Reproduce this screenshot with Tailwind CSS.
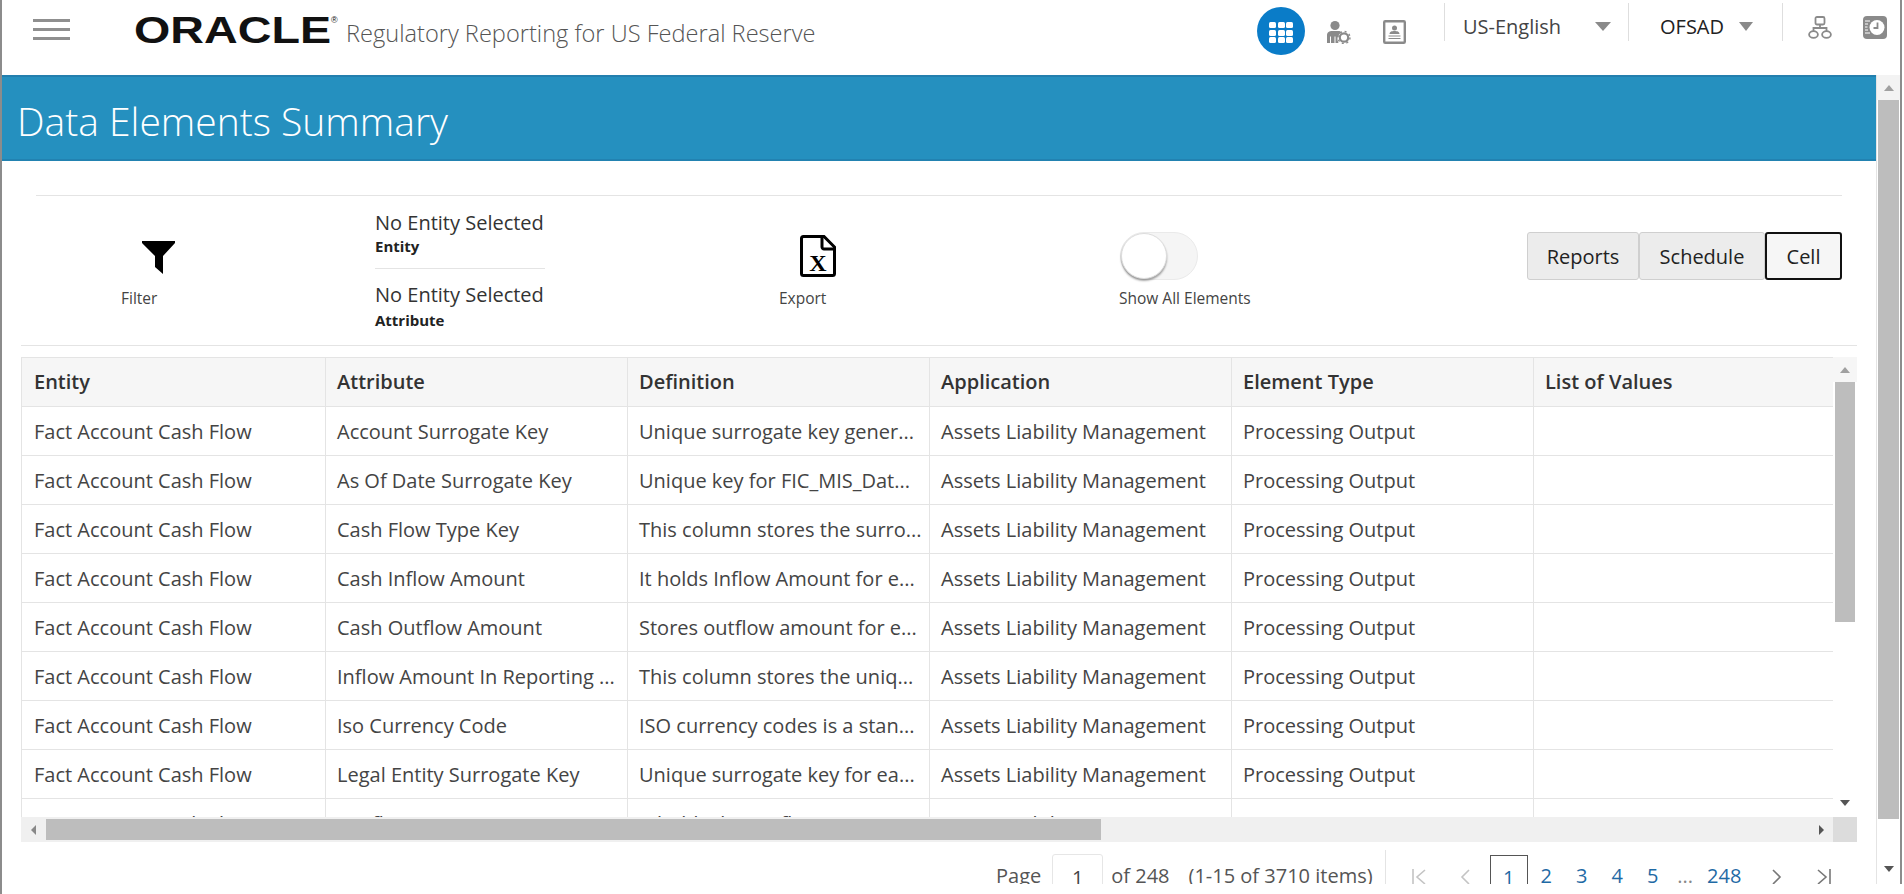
<!DOCTYPE html>
<html lang="en">
<head>
    <meta charset="UTF-8">
    <title>Data Elements Summary</title>
    <script src="https://cdn.jsdelivr.net/npm/@tailwindcss/browser@4"></script>
</head>
<body class="h-screen overflow-hidden bg-white font-['Open_Sans',sans-serif] text-[#333]">
<div class="w-[1902px] h-[894px] border-l-2 border-[#8c8c8c]">
<div class="h-[884px] border-r-2 border-[#8c8c8c] flex flex-col overflow-hidden">

    <!-- Top header -->
    <header class="h-[75px] shrink-0 flex items-start">
        <div class="ml-[31px] mt-[19px] w-[37px] flex flex-col gap-[6px]">
            <span class="h-[3px] bg-[#8f8f8f]"></span>
            <span class="h-[3px] bg-[#8f8f8f]"></span>
            <span class="h-[3px] bg-[#8f8f8f]"></span>
        </div>
        <svg class="ml-[64px] mt-[6px] shrink-0" width="206" height="44" viewBox="0 0 206 44">
            <text x="0" y="36.5" font-family="Liberation Sans" font-weight="700" font-size="36" textLength="197" lengthAdjust="spacingAndGlyphs" fill="#111">ORACLE</text>
            <text x="197" y="17" font-family="Liberation Sans" font-size="9" fill="#111">®</text>
        </svg>
        <span class="ml-[6px] mt-[17px] text-[23.6px] leading-[32px] text-[#555] font-light whitespace-nowrap">Regulatory Reporting for US Federal Reserve</span>

        <div class="ml-auto flex items-start">
            <div class="mt-[7px] w-[48px] h-[48px] rounded-full bg-[#0a7cc8] grid grid-cols-3 gap-[1.5px] p-[12px] pt-[15px] pb-[12px]">
                <span class="bg-white rounded-[1.5px]"></span><span class="bg-white rounded-[1.5px]"></span><span class="bg-white rounded-[1.5px]"></span>
                <span class="bg-white rounded-[1.5px]"></span><span class="bg-white rounded-[1.5px]"></span><span class="bg-white rounded-[1.5px]"></span>
                <span class="bg-white rounded-[1.5px]"></span><span class="bg-white rounded-[1.5px]"></span><span class="bg-white rounded-[1.5px]"></span>
            </div>
            <!-- person with gear -->
            <svg class="ml-[21px] mt-[20px]" width="25" height="24" viewBox="0 0 25 24">
                <circle cx="9" cy="5.5" r="4.6" fill="#8a8a8a"/>
                <path d="M1 23V15.5C1 12 3.5 11 6 11H12.5C14 11 15 11.6 15.6 12.5C12.5 14 11 17 11.6 20.5L12.5 23H9.5V16.5H8.5V23H5V16.5H4V23Z" fill="#8a8a8a"/>
                <circle cx="18" cy="17.5" r="4.2" fill="none" stroke="#8a8a8a" stroke-width="2.2"/>
                <circle cx="18" cy="17.5" r="6" fill="none" stroke="#8a8a8a" stroke-width="1.4" stroke-dasharray="2 2.7"/>
            </svg>
            <!-- contact card -->
            <svg class="ml-[32px] mt-[20px]" width="23" height="24" viewBox="0 0 23 24">
                <rect x="1.2" y="1.2" width="20.6" height="21.6" rx="1" fill="#fff" stroke="#8a8a8a" stroke-width="2.4"/>
                <circle cx="11.5" cy="8" r="2.5" fill="#8a8a8a"/>
                <path d="M6.5 14C6.5 11.6 9 11 11.5 11S16.5 11.6 16.5 14Z" fill="#8a8a8a"/>
                <path d="M5.5 16H17.5M5.5 18.5H17.5" stroke="#8a8a8a" stroke-width="1.2"/>
            </svg>
            <span class="ml-[38px] mt-[3px] w-px h-[38px] bg-[#dedede]"></span>
            <span class="ml-[18px] mt-[10px] w-[132px] text-[20px] leading-[34px] text-[#444]">US-English</span>
            <span class="mt-[22px] w-0 h-0 border-x-[8px] border-x-transparent border-t-[9px] border-t-[#8a8a8a]"></span>
            <span class="ml-[17px] mt-[3px] w-px h-[38px] bg-[#dedede]"></span>
            <span class="ml-[31px] mt-[10px] w-[79px] text-[20px] leading-[34px] text-[#222]">OFSAD</span>
            <span class="mt-[22px] w-0 h-0 border-x-[7px] border-x-transparent border-t-[9px] border-t-[#8a8a8a]"></span>
            <span class="ml-[29px] mt-[3px] w-px h-[38px] bg-[#dedede]"></span>
            <!-- hierarchy -->
            <svg class="ml-[25px] mt-[16px]" width="24" height="23" viewBox="0 0 24 23" fill="none" stroke="#8a8a8a" stroke-width="1.8">
                <rect x="7.5" y="1" width="9" height="7.5" rx="1.5"/>
                <path d="M12 8.5V12M5.5 15.5V12H18.5V15.5"/>
                <ellipse cx="5.5" cy="18.5" rx="4.4" ry="3.4"/>
                <ellipse cx="18.5" cy="18.5" rx="4.4" ry="3.4"/>
            </svg>
            <!-- clock book -->
            <svg class="ml-[31px] mt-[16px] mr-[13px]" width="24" height="23" viewBox="0 0 24 23">
                <rect width="24" height="23" rx="4" fill="#8a8a8a"/>
                <path d="M2 5H7M2 8H5M2 11H4.5M2 14H5M2 17H7" stroke="#fff" stroke-width="1"/>
                <circle cx="14" cy="11.5" r="7.5" fill="#fff"/>
                <path d="M14.5 6.5V12H10.5" fill="none" stroke="#8a8a8a" stroke-width="1.8"/>
            </svg>
        </div>
    </header>

    <div class="flex-1 min-h-0 flex">
        <main class="w-[1874px] flex flex-col min-h-0 overflow-hidden">
            <!-- Banner -->
            <div class="h-[86px] shrink-0 bg-[#2590bf] border-t-2 border-t-[#237fae] border-b-2 border-b-[#2282b1] flex items-center pl-[15px] pt-[4px]">
                <h1 class="text-[39px] font-light leading-none text-white whitespace-nowrap">Data Elements Summary</h1>
            </div>

            <!-- Toolbar -->
            <section class="ml-[19px] w-[1836px] mt-[34px] h-[151px] shrink-0 border-b border-[#e4e4e4] px-[15px]">
                <div class="h-full border-t border-[#e4e4e4] flex">
                    <div class="ml-[85px] w-[254px] pt-[45px]">
                        <svg class="ml-[21px]" width="33" height="33" viewBox="0 0 33 33">
                            <path d="M0 0H33V2L21 15V33L13 26V15L0 2Z" fill="#000"/>
                        </svg>
                        <p class="mt-[14px] text-[15.5px] leading-[20px] text-[#444]">Filter</p>
                    </div>
                    <div class="w-[404px] pt-[13px]">
                        <p class="text-[20px] leading-[28px] text-[#333]">No Entity Selected</p>
                        <p class="text-[15px] leading-[20px] font-bold text-[#222] mt-[-1px]">Entity</p>
                        <div class="w-[170px] mt-[12px] border-t border-[#e4e4e4]"></div>
                        <p class="mt-[12px] text-[20px] leading-[28px] text-[#333]">No Entity Selected</p>
                        <p class="text-[15px] leading-[20px] font-bold text-[#222] mt-[1px]">Attribute</p>
                    </div>
                    <div class="w-[340px] pt-[39px]">
                        <svg class="ml-[21px]" width="36" height="42" viewBox="0 0 36 42" fill="none">
                            <path d="M24 1.5H3.5C2.4 1.5 1.5 2.4 1.5 3.5V38.5C1.5 39.6 2.4 40.5 3.5 40.5H32.5C33.6 40.5 34.5 39.6 34.5 38.5V12Z" stroke="#000" stroke-width="3"/>
                            <path d="M22 1.5V12C22 13 23 14 24 14H34.5" stroke="#000" stroke-width="3"/>
                            <text x="18" y="36" text-anchor="middle" font-family="Liberation Serif" font-weight="700" font-size="24" fill="#000">X</text>
                        </svg>
                        <p class="mt-[11px] text-[15.5px] leading-[20px] text-[#444]">Export</p>
                    </div>
                    <div class="pt-[36px]">
                        <div class="ml-px w-[78px] h-[48px] rounded-full bg-[#f5f5f5] border border-[#eaeaea]">
                            <div class="w-[46px] h-[46px] rounded-full bg-white border border-[#ddd] shadow-[0_2px_2px_rgba(0,0,0,0.35)]"></div>
                        </div>
                        <p class="mt-[8px] text-[15.5px] leading-[20px] text-[#444] whitespace-nowrap">Show All Elements</p>
                    </div>
                    <div class="ml-auto pt-[36px] flex items-start text-[20px] text-[#222]">
                        <button class="h-[48px] w-[112px] pt-[2px] bg-[#ececec] border border-[#cfcfcf] rounded-[3px]">Reports</button>
                        <button class="h-[48px] w-[126px] pt-[2px] bg-[#ececec] border border-[#cfcfcf] rounded-[3px]">Schedule</button>
                        <button class="h-[48px] w-[77px] pt-[2px] bg-[#f6f6f6] border-2 border-[#111] rounded-[3px]">Cell</button>
                    </div>
                </div>
            </section>

            <!-- Data table -->
            <section class="ml-[19px] w-[1836px] mt-[11px] shrink-0">
                <div class="h-[460px] flex">
                    <div class="w-[1812px] overflow-hidden">
                        <table class="w-[1812px] table-fixed border-collapse text-[20px] text-[#444] [&_td]:h-[49px] [&_td]:border [&_td]:border-[#e4e4e4] [&_td]:pl-[11px] [&_td]:pt-[2px] [&_td]:whitespace-nowrap [&_td:first-child]:pl-[12px] [&_th]:h-[49px] [&_th]:border [&_th]:border-[#e4e4e4] [&_th]:pl-[11px] [&_th]:text-left [&_th]:font-semibold [&_th]:text-[#333] [&_th]:bg-[#f6f6f6] [&_th:first-child]:pl-[12px]">
                            <colgroup>
                                <col class="w-[304px]"><col class="w-[302px]"><col class="w-[302px]"><col class="w-[302px]"><col class="w-[302px]"><col class="w-[300px]">
                            </colgroup>
                            <thead>
                                <tr><th>Entity</th><th>Attribute</th><th>Definition</th><th>Application</th><th>Element Type</th><th>List of Values</th></tr>
                            </thead>
                            <tbody>
                                <tr><td>Fact Account Cash Flow</td><td>Account Surrogate Key</td><td>Unique surrogate key gener...</td><td>Assets Liability Management</td><td>Processing Output</td><td></td></tr>
                                <tr><td>Fact Account Cash Flow</td><td>As Of Date Surrogate Key</td><td>Unique key for FIC_MIS_Dat...</td><td>Assets Liability Management</td><td>Processing Output</td><td></td></tr>
                                <tr><td>Fact Account Cash Flow</td><td>Cash Flow Type Key</td><td>This column stores the surro...</td><td>Assets Liability Management</td><td>Processing Output</td><td></td></tr>
                                <tr><td>Fact Account Cash Flow</td><td>Cash Inflow Amount</td><td>It holds Inflow Amount for e...</td><td>Assets Liability Management</td><td>Processing Output</td><td></td></tr>
                                <tr><td>Fact Account Cash Flow</td><td>Cash Outflow Amount</td><td>Stores outflow amount for e...</td><td>Assets Liability Management</td><td>Processing Output</td><td></td></tr>
                                <tr><td>Fact Account Cash Flow</td><td>Inflow Amount In Reporting ...</td><td>This column stores the uniq...</td><td>Assets Liability Management</td><td>Processing Output</td><td></td></tr>
                                <tr><td>Fact Account Cash Flow</td><td>Iso Currency Code</td><td>ISO currency codes is a stan...</td><td>Assets Liability Management</td><td>Processing Output</td><td></td></tr>
                                <tr><td>Fact Account Cash Flow</td><td>Legal Entity Surrogate Key</td><td>Unique surrogate key for ea...</td><td>Assets Liability Management</td><td>Processing Output</td><td></td></tr>
                                <tr><td>Fact Account Cash Flow</td><td>Outflow Amount In Reporting ...</td><td>It holds the outflow amount...</td><td>Assets Liability Management</td><td>Processing Output</td><td></td></tr>
                            </tbody>
                        </table>
                    </div>
                    <!-- vertical scrollbar of the grid -->
                    <div class="w-[24px] flex flex-col items-center bg-white">
                        <div class="w-full h-[25px] bg-[#f6f6f6] flex items-center justify-center">
                            <span class="w-0 h-0 border-x-[5px] border-x-transparent border-b-[6px] border-b-[#a0a0a0]"></span>
                        </div>
                        <div class="w-[20px] h-[240px] bg-[#bdbdbd]"></div>
                        <span class="mt-[178px] w-0 h-0 border-x-[5px] border-x-transparent border-t-[6px] border-t-[#555]"></span>
                    </div>
                </div>
                <!-- horizontal scrollbar of the grid -->
                <div class="h-[25px] flex bg-[#f0f0f0]">
                    <div class="w-[25px] flex items-center justify-center">
                        <span class="w-0 h-0 border-y-[5px] border-y-transparent border-r-[5px] border-r-[#888]"></span>
                    </div>
                    <div class="my-[2px] w-[1055px] bg-[#bdbdbd]"></div>
                    <div class="w-[732px] flex items-center justify-end pr-[9px]">
                        <span class="w-0 h-0 border-y-[5px] border-y-transparent border-l-[5px] border-l-[#555]"></span>
                    </div>
                    <div class="w-[24px] bg-[#dcdcdc]"></div>
                </div>
            </section>

            <!-- Pager, cut off by the frame like in the screenshot -->
            <nav class="flex items-start text-[20px] text-[#555] h-[42px] shrink-0 overflow-hidden">
                <span class="ml-[994px] mt-[19px] leading-[30px]">Page</span>
                <span class="ml-[11px] mt-[12px] w-[51px] h-[48px] border border-[#e6e6e6] rounded-[3px] flex items-center justify-center text-[#444]">1</span>
                <span class="ml-[8px] mt-[19px] leading-[30px]">of 248</span>
                <span class="ml-[19px] mt-[19px] leading-[30px] whitespace-nowrap">(1-15 of 3710 items)</span>
                <span class="ml-[12px] mt-[8px] w-px h-[40px] bg-[#e4e4e4]"></span>
                <svg class="ml-[26px] mt-[27px]" width="15" height="16" viewBox="0 0 15 16" fill="none" stroke="#c4c4c4" stroke-width="1.6"><path d="M1 0V16M13 1L5 8L13 15"/></svg>
                <svg class="ml-[33px] mt-[27px]" width="10" height="16" viewBox="0 0 10 16" fill="none" stroke="#c4c4c4" stroke-width="1.6"><path d="M9 1L2 8L9 15"/></svg>
                <span class="ml-[20px] mt-[13px] w-[38px] h-[40px] border border-[#555] flex items-center justify-center text-[#1f6aa5] pt-[5px]">1</span>
                <div class="text-[#1f6aa5] mt-[19px] leading-[30px] flex">
                    <span class="ml-[13px]">2</span>
                    <span class="ml-[24px]">3</span>
                    <span class="ml-[24px]">4</span>
                    <span class="ml-[24px]">5</span>
                    <span class="ml-[19px] text-[#888]">...</span>
                    <span class="ml-[14px]">248</span>
                </div>
                <svg class="ml-[31px] mt-[27px]" width="10" height="16" viewBox="0 0 10 16" fill="none" stroke="#777" stroke-width="1.6"><path d="M1 1L8 8L1 15"/></svg>
                <svg class="ml-[34px] mt-[27px]" width="15" height="16" viewBox="0 0 15 16" fill="none" stroke="#777" stroke-width="1.6"><path d="M2 1L10 8L2 15M14 0V16"/></svg>
            </nav>
        </main>

        <!-- page scrollbar -->
        <aside class="w-[24px] flex flex-col items-center border-l border-[#e4e4e4]">
            <div class="w-full h-[25px] flex items-center justify-center bg-[#f3f3f3]">
                <span class="w-0 h-0 border-x-[5px] border-x-transparent border-b-[6px] border-b-[#a0a0a0]"></span>
            </div>
            <div class="w-[21px] h-[719px] bg-[#bdbdbd]"></div>
            <span class="mt-[47px] w-0 h-0 border-x-[5px] border-x-transparent border-t-[6px] border-t-[#555]"></span>
        </aside>
    </div>
</div>
</div>
</body>
</html>
